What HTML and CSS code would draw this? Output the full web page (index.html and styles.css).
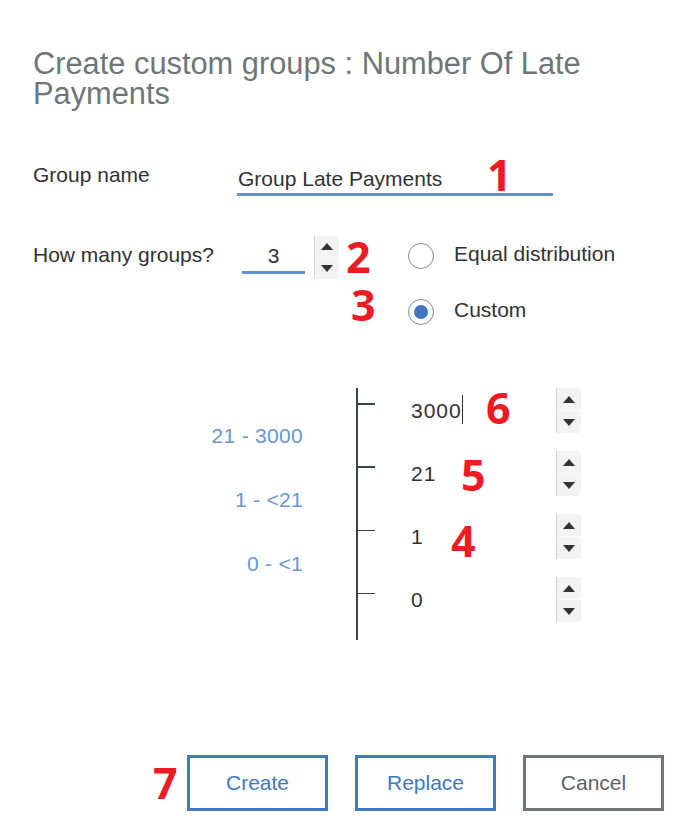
FILE: index.html
```html
<!DOCTYPE html>
<html lang="en">
<head>
<meta charset="utf-8">
<title>Create custom groups</title>
<link rel="stylesheet" href="styles.css">
</head>
<body>
<div class="page">
  <h1 class="title">Create custom groups : Number Of Late Payments</h1>

  <div class="name-row">
    <div class="label name-label">Group name</div>
    <div class="text-input">Group Late Payments</div>
  </div>

  <div class="count-row">
    <div class="label count-label">How many groups?</div>
    <div class="num-input">3</div>
    <div class="spinner small">
      <div class="spin-btn"><svg width="12" height="7" viewBox="0 0 12 7"><path d="M6 0L12 7H0z"/></svg></div>
      <div class="spin-btn"><svg width="12" height="7" viewBox="0 0 12 7"><path d="M0 0H12L6 7z"/></svg></div>
    </div>
    <div class="radios">
      <div class="radio-option"><span class="radio"></span><span class="radio-text">Equal distribution</span></div>
      <div class="radio-option"><span class="radio checked"></span><span class="radio-text">Custom</span></div>
    </div>
  </div>

  <div class="scale">
    <div class="ranges">
      <div class="range">21 - 3000</div>
      <div class="range">1 - &lt;21</div>
      <div class="range">0 - &lt;1</div>
    </div>
    <div class="axis">
      <div class="tick-slot"><div class="tick"></div></div>
      <div class="tick-slot"><div class="tick"></div></div>
      <div class="tick-slot"><div class="tick thin"></div></div>
      <div class="tick-slot"><div class="tick thin"></div></div>
    </div>
    <div class="values">
      <div class="value-row">
        <div class="value"><span class="typed">3000</span></div>
        <div class="spinner">
          <div class="spin-btn"><svg width="12" height="7" viewBox="0 0 12 7"><path d="M6 0L12 7H0z"/></svg></div>
          <div class="spin-btn"><svg width="12" height="7" viewBox="0 0 12 7"><path d="M0 0H12L6 7z"/></svg></div>
        </div>
      </div>
      <div class="value-row">
        <div class="value">21</div>
        <div class="spinner">
          <div class="spin-btn"><svg width="12" height="7" viewBox="0 0 12 7"><path d="M6 0L12 7H0z"/></svg></div>
          <div class="spin-btn"><svg width="12" height="7" viewBox="0 0 12 7"><path d="M0 0H12L6 7z"/></svg></div>
        </div>
      </div>
      <div class="value-row">
        <div class="value">1</div>
        <div class="spinner">
          <div class="spin-btn"><svg width="12" height="7" viewBox="0 0 12 7"><path d="M6 0L12 7H0z"/></svg></div>
          <div class="spin-btn"><svg width="12" height="7" viewBox="0 0 12 7"><path d="M0 0H12L6 7z"/></svg></div>
        </div>
      </div>
      <div class="value-row">
        <div class="value">0</div>
        <div class="spinner">
          <div class="spin-btn"><svg width="12" height="7" viewBox="0 0 12 7"><path d="M6 0L12 7H0z"/></svg></div>
          <div class="spin-btn"><svg width="12" height="7" viewBox="0 0 12 7"><path d="M0 0H12L6 7z"/></svg></div>
        </div>
      </div>
    </div>
  </div>

  <div class="actions">
    <button class="btn" type="button">Create</button>
    <button class="btn" type="button">Replace</button>
    <button class="btn secondary" type="button">Cancel</button>
  </div>

  <span class="mark m1">1</span>
  <span class="mark m2">2</span>
  <span class="mark m3">3</span>
  <span class="mark m4">4</span>
  <span class="mark m5">5</span>
  <span class="mark m6">6</span>
  <span class="mark m7">7</span>
</div>
</body>
</html>
```
FILE: styles.css
```css
* { box-sizing: border-box; }
html, body { margin: 0; padding: 0; background: #fff; }
body { font-family: "Liberation Sans", Arial, sans-serif; color: #323232; }

.page { position: relative; width: 691px; height: 838px; padding: 49px 0 0 33px; overflow: hidden; }

.title { margin: 0; width: 620px; font-weight: normal; font-size: 30.8px; line-height: 30px; color: #6e7777; }

.label { font-size: 21px; line-height: 24px; color: #323232; }

.name-row { display: flex; align-items: flex-start; margin-top: 54px; }
.name-label { width: 204px; }
.text-input { width: 316px; margin-top: 4px; padding: 0 0 2px 1px; font-size: 21px; line-height: 24px; color: #323232; border-bottom: 3px solid #6291cc; }

.count-row { display: flex; align-items: flex-start; margin-top: 40px; }
.count-label { width: 209px; margin-top: 7px; }
.num-input { width: 63px; margin-top: 8px; padding-bottom: 3px; text-align: center; font-size: 21px; line-height: 24px; border-bottom: 3px solid #6291cc; }

.spinner { width: 25px; height: 45px; display: flex; flex-direction: column; background: #f3f3f3; border-left: 1px solid #d4d4d4; border-radius: 0 4px 4px 0; }
.spinner.small { height: 43px; margin-left: 9px; }
.spin-btn { flex: 1; display: flex; align-items: center; justify-content: center; }
.spin-btn + .spin-btn { border-top: 1px solid #fbfbfb; }
.spin-btn svg { display: block; fill: #333; }

.radios { display: flex; flex-direction: column; gap: 28px; margin-left: 69px; margin-top: 6px; }
.radio-option { display: flex; align-items: center; gap: 20px; height: 28px; }
.radio { width: 26px; height: 26px; border: 1px solid #8a8a8a; border-radius: 50%; display: flex; align-items: center; justify-content: center; background: #fff; }
.radio.checked::after { content: ""; width: 14px; height: 14px; border-radius: 50%; background: #4178be; }
.radio-text { font-size: 21px; line-height: 24px; padding-bottom: 4px; color: #323232; }

.scale { display: flex; margin-top: 62px; }
.ranges { width: 270px; padding-top: 36px; display: flex; flex-direction: column; align-items: flex-end; gap: 40px; color: #6897d0; font-size: 21px; line-height: 24px; letter-spacing: 0.3px; }
.axis { margin-left: 53px; width: 19px; height: 252px; border-left: 2px solid #3b4446; }
.tick-slot { height: 63px; padding-top: 15px; }
.tick { height: 2px; background: #3b4446; }
.tick.thin { height: 1px; margin-top: 1px; }
.values { display: flex; flex-direction: column; }
.value-row { height: 63px; display: flex; align-items: flex-start; }
.value { width: 181px; padding-left: 36px; margin-top: 11px; font-size: 21px; line-height: 24px; letter-spacing: 1px; color: #323232; }
.typed { border-right: 1px solid #333; padding: 4px 0 2px 0; }

.actions { display: flex; justify-content: flex-end; gap: 27px; margin-top: 115px; padding-right: 27px; }
.btn { width: 141px; height: 56px; margin: 0; padding: 0; border: 3px solid #4178be; background: #fff; color: #4178be; font-family: "Liberation Sans", Arial, sans-serif; font-size: 21px; display: flex; align-items: center; justify-content: center; }
.btn.secondary { border-color: #6e7676; color: #5b6363; }

.mark { position: absolute; font-family: "Open Sans", "Noto Sans", sans-serif; font-weight: 700; font-size: 43px; line-height: 1; color: #ed1c24; }
.m1 { left: 487px; top: 153px; }
.m2 { left: 346px; top: 235px; }
.m3 { left: 351px; top: 283px; }
.m4 { left: 451px; top: 519px; }
.m5 { left: 461px; top: 453px; }
.m6 { left: 486px; top: 386px; }
.m7 { left: 153px; top: 761px; }
```
